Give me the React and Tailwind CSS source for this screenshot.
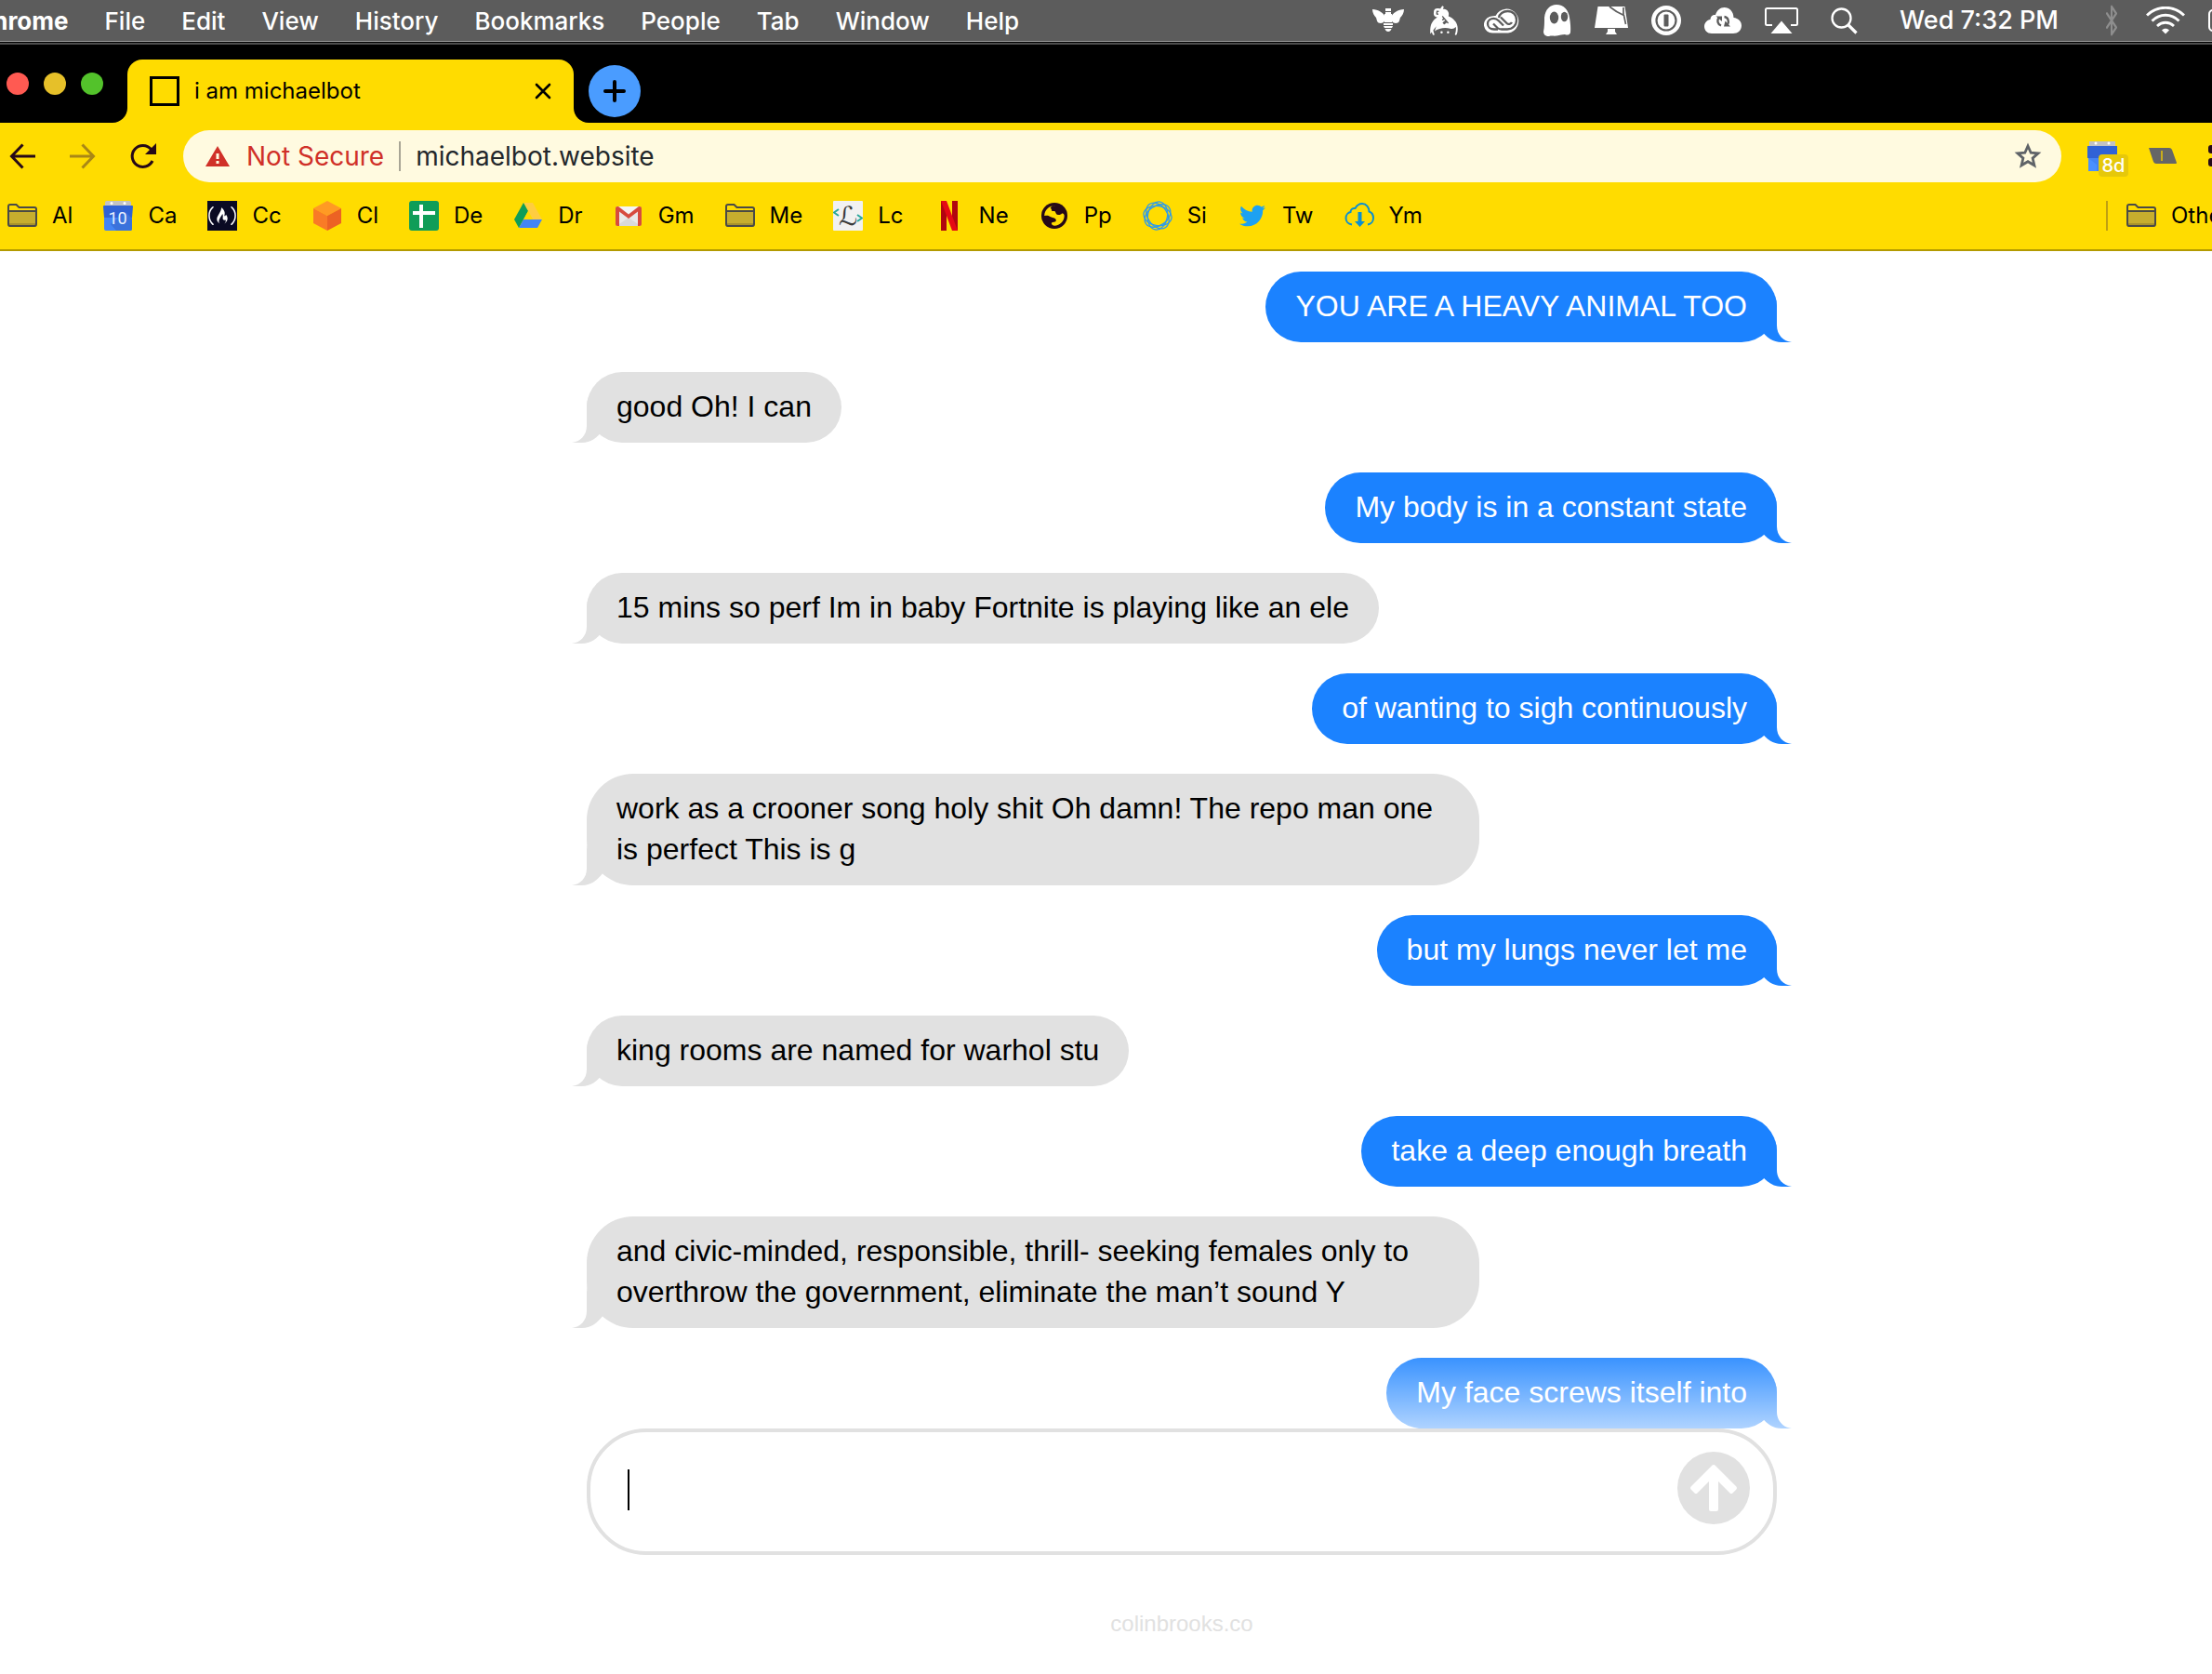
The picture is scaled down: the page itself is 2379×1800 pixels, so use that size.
import React, { useState } from 'react';
import { FaKeybase, FaFreeCodeCamp, FaTwitter } from 'react-icons/fa';
import { Bluetooth } from 'lucide-react';
import clsx from 'clsx';

const menuItems = ['File', 'Edit', 'View', 'History', 'Bookmarks', 'People', 'Tab', 'Window', 'Help'];

const messages = [
  { from: 'me', text: 'YOU ARE A HEAVY ANIMAL TOO' },
  { from: 'bot', text: 'good Oh! I can' },
  { from: 'me', text: 'My body is in a constant state' },
  { from: 'bot', text: '15 mins so perf Im in baby Fortnite is playing like an ele' },
  { from: 'me', text: 'of wanting to sigh continuously' },
  { from: 'bot', text: 'work as a crooner song holy shit Oh damn! The repo man one is perfect This is g' },
  { from: 'me', text: 'but my lungs never let me' },
  { from: 'bot', text: 'king rooms are named for warhol stu' },
  { from: 'me', text: 'take a deep enough breath' },
  { from: 'bot', text: 'and civic-minded, responsible, thrill- seeking females only to overthrow the government, eliminate the man’t sound Y' },
  { from: 'me', text: 'My face screws itself into' },
];

/* ---------- menu bar icons ---------- */

const BeeIcon = () => (
  <svg width="34" height="26" viewBox="0 0 34 26" fill="white">
    <path d="M0 1C6 1 13 5 14 10C14 13 12 16 9 16C5 16 5 13 4 10C2 8 0 5 0 1Z" />
    <path d="M34 1C28 1 21 5 20 10C20 13 22 16 25 16C29 16 29 13 30 10C32 8 34 5 34 1Z" />
    <path d="M14 0H20V3H14ZM14 4H20V6H21V15H13V6H14Z" />
    <path d="M12 16H22V18H12ZM12 19H22L21 21H13ZM13.500 22H20.500C20 24 18.500 25 17 25C15.500 25 14 24 13.500 22Z" />
  </svg>
);

const CreativeCloudIcon = () => (
  <svg width="39" height="28" viewBox="0 0 39 28" fill="none">
    <path d="M9 27.500A9 9 0 0 1 6 10C9 9 11 9 12.500 9A13 13 0 1 1 26 27.500Z" fill="white" />
    <g stroke="#5c5c5c" strokeWidth="2.300">
      <path d="M15 23.500H11C7 23.500 4 21 4 17.500C4 14 7 11.800 10.500 11.800C13 11.800 14.500 13 16 14.500L21 19.500" />
      <path d="M10 17.500L14.500 22C16 23.300 17 23.500 19 23.500H25C31 23.500 35 19 35 13.500C35 8 31 4 25.500 4C20.500 4 16.500 7 16 11" />
      <path d="M18 10.500L24.500 17C26 18.500 29 18 30 16" />
    </g>
  </svg>
);

const GhostIcon = () => (
  <svg width="30" height="34" viewBox="0 0 30 34">
    <path d="M14 0C22 0 27 6 28 14C29 20 29.500 25 29 30C28 33 25 33 23 32C20 32 18 33 14 33.500C11 34 9 33 6 34C2 34 0 32 0 29C1 24 1 19 1 14C2 5 7 0 14 0Z" fill="white" />
    <ellipse cx="11.500" cy="14" rx="4.700" ry="6.500" fill="#5c5c5c" />
    <ellipse cx="22.500" cy="13" rx="3.700" ry="5.200" fill="#5c5c5c" />
  </svg>
);

const MonitorIcon = () => (
  <svg width="36" height="31" viewBox="0 0 36 31">
    <path d="M3.500 0H32.500L36 23H0Z" fill="white" />
    <path d="M16 0C22 5 28 8 31.500 9.500L33.500 19M31 1V9.500" fill="none" stroke="#5c5c5c" strokeWidth="1.700" />
    <path d="M14 24H22V27L24 30H12L14 27Z" fill="white" />
  </svg>
);

const OnePasswordIcon = () => (
  <svg width="32" height="32" viewBox="0 0 32 32">
    <circle cx="16" cy="16" r="16" fill="white" />
    <circle cx="16" cy="16" r="10.500" fill="none" stroke="#5c5c5c" strokeWidth="2.200" />
    <rect x="13.500" y="9.500" width="5" height="13" rx="1" fill="#5c5c5c" />
  </svg>
);

const CloudSyncIcon = () => (
  <svg width="40" height="28" viewBox="0 0 40 28">
    <path d="M8 28C3 28 0 24.500 0 20.500C0 16.500 3 13.500 6.500 13C6.500 9.500 9.500 7.500 12 8C13.500 3 17 0 21.500 0C27 0 31.500 4.500 31.500 11C36.500 11.500 40 15 40 19.500C40 24.500 36 28 31 28Z" fill="white" />
    <g fill="none" stroke="#5c5c5c" strokeWidth="2.400">
      <path d="M18 19.500C14 18 13.500 14 15.500 11" />
      <path d="M21.500 10C25.500 10.500 27 15 25 18.500" />
    </g>
    <path d="M12.500 9.500H19V15ZM28 20.500H21L22.500 14.500Z" fill="#5c5c5c" />
  </svg>
);

const AirplayIcon = () => (
  <svg width="36" height="28" viewBox="0 0 36 28">
    <path d="M8 19H2.500Q1 19 1 17.500V2.500Q1 1 2.500 1H33.500Q35 1 35 2.500V17.500Q35 19 33.500 19H28" fill="none" stroke="white" strokeWidth="2" />
    <path d="M18 14.500L29.500 28H6.500Z" fill="white" />
  </svg>
);

const SearchIcon = () => (
  <svg width="29" height="29" viewBox="0 0 29 29" fill="none" stroke="white">
    <circle cx="11.500" cy="11.500" r="10" strokeWidth="2.300" />
    <path d="M19 19L27.500 27.500" strokeWidth="3.200" />
  </svg>
);

const WifiIcon = () => (
  <svg width="42" height="30" viewBox="0 0 42 30" fill="none" stroke="white" strokeWidth="2.900">
    <path d="M1 9.500C12-1.500 30-1.500 41 9.500" />
    <path d="M6.500 15.500C15 7.200 27 7.200 35.500 15.500" />
    <path d="M12 21C17.500 16 24.500 16 30 21" />
    <path d="M21 29.500L17 25.500C19 23.300 23 23.300 25 25.500Z" fill="white" stroke="none" />
  </svg>
);

const BatteryIcon = () => (
  <svg width="48" height="24" viewBox="0 0 48 24">
    <rect x="1" y="1" width="42" height="22" rx="4" fill="none" stroke="white" strokeWidth="2" />
    <rect x="5" y="5" width="34" height="14" rx="1" fill="white" />
  </svg>
);

/* ---------- bookmark icons ---------- */

const FolderIcon = () => (
  <svg width="32" height="32" viewBox="0 0 32 32" className="shrink-0">
    <path d="M1 11H31V26Q31 28 29 28H3Q1 28 1 26Z" fill="#c7ae2e" />
    <path d="M1 24H31V26Q31 28 29 28H3Q1 28 1 26Z" fill="#a9932a" />
    <path d="M1 6Q1 4 3 4H9.500L12.500 7H29Q31 7 31 9V25Q31 27 29 27H3Q1 27 1 25ZM1 11H31" fill="none" stroke="#4a4a46" strokeWidth="2" />
  </svg>
);

const CalendarIcon = () => (
  <svg width="32" height="32" viewBox="0 0 32 32">
    <path d="M2 2Q2 0 4 0H28Q30 0 30 2V6H2Z" fill="#c2c2c2" />
    <circle cx="9" cy="2.500" r="1.500" fill="white" />
    <circle cx="23" cy="2.500" r="1.500" fill="white" />
    <path d="M0 6Q0 5 1 5H31Q32 5 32 6L31 18H1Z" fill="#3062d6" />
    <path d="M1 18H31V30Q31 32 29 32H3Q1 32 1 30Z" fill="#4384f4" />
    <path d="M8 25L14 32H29Q31 32 31 30V19L24 12Z" fill="#3a72dc" />
    <text x="15.500" y="25" textAnchor="middle" className="font-['Roboto',sans-serif] text-[18px]" fill="#e8f0fe">10</text>
  </svg>
);

const CodeCampIcon = () => (
  <span className="flex size-8 items-center justify-center bg-[#0a0a23]">
    <FaFreeCodeCamp className="size-[30px] text-white" />
  </span>
);

const CubeIcon = () => (
  <svg width="32" height="32" viewBox="0 0 32 32">
    <path d="M16 0L31 8L16 16L1 8Z" fill="#ff9a24" />
    <path d="M1 8L16 16V32L1 24Z" fill="#f97b26" />
    <path d="M31 8L16 16V32L31 24Z" fill="#ec6224" />
  </svg>
);

const SheetsIcon = () => (
  <svg width="32" height="32" viewBox="0 0 32 32">
    <rect width="32" height="32" rx="3" fill="#0f9d58" />
    <path d="M11 4H15V29H11ZM4 11H28V15H4Z" fill="white" />
  </svg>
);

const DriveIcon = () => (
  <svg width="32" height="32" viewBox="0 0 32 32">
    <path d="M11 2H21L31 20H21Z" fill="#ffcd40" />
    <path d="M11 2L16 11L6 29L1 20Z" fill="#0f9d58" />
    <path d="M11 20H31L26 29H6Z" fill="#4385f5" />
    <path d="M16 11L21 20H11Z" fill="#ffdc00" />
  </svg>
);

const GmailIcon = () => (
  <svg width="32" height="32" viewBox="0 0 32 32">
    <path d="M3 6H29V27H3Z" fill="#e9e9e9" />
    <path d="M3 27L16 18L29 27Z" fill="#d9d9d9" />
    <path d="M6 6H26L16 14Z" fill="#f5f5f5" />
    <path d="M2 8Q2 6 4 6H5L16 14.500L27 6H28Q30 6 30 8V25Q30 27 28 27H26V11.500L16 19L6 11.500V27H4Q2 27 2 25Z" fill="#d74b3f" />
  </svg>
);

const ScriptIcon = () => (
  <svg width="32" height="32" viewBox="0 0 32 32">
    <rect width="32" height="32" rx="1" fill="#f1f1f1" />
    <text x="16" y="26" textAnchor="middle" className="font-['DejaVu_Sans',sans-serif] text-[28px]" fill="#3a3a3a">ℒ</text>
    <path d="M6 9L1 12.500L6 16M26 15L31 18.500L26 22" fill="none" stroke="#2aa79b" strokeWidth="2" />
  </svg>
);

const NetflixIcon = () => (
  <svg width="32" height="32" viewBox="0 0 32 32">
    <rect x="7" width="6" height="32" fill="#b1060f" />
    <rect x="19" width="6" height="32" fill="#b1060f" />
    <path d="M7 0H13L25 32H19Z" fill="#e50914" />
  </svg>
);

const GlobeIcon = () => (
  <svg width="32" height="32" viewBox="0 0 32 32">
    <circle cx="16" cy="16" r="14" fill="#260918" />
    <path d="M17 5C13 5 11.500 7 11.500 9.500C12 11 14 11 15.500 11C17.500 11 17 13 18.500 14.500C21 15.500 23 15 24 13.500C25.500 13.500 26.500 14 26.700 16C26.500 22 22 26.500 16 26.800C13.500 26.500 12.500 25 13 23.500C14.500 22.800 16.500 23 17.500 22C18.500 20 17 18.500 14 18L11.500 17C9.500 15.500 8 15.500 5.200 16C5.500 10 9.500 5.500 17 5Z" fill="#ffdc00" />
    <path d="M11 8C13 7 14 12 12 13C9 13 9 16 6 15C6 12 8 9 11 8Z" fill="#ffdc00" />
  </svg>
);

const RingsIcon = () => (
  <svg width="32" height="32" viewBox="0 0 32 32" fill="none" stroke="#2f9be8" strokeWidth="1.300">
    {[10, 55, 100, 145].map((angle) => (
      <ellipse key={angle} cx="16" cy="16" rx="15.200" ry="10.500" transform={`rotate(${angle} 16 16)`} />
    ))}
  </svg>
);

const TwitterIcon = () => (
  <span className="flex size-8 items-center justify-center">
    <FaTwitter className="size-7 text-[#1da1f2]" />
  </span>
);

const CloudDownIcon = () => (
  <svg width="32" height="32" viewBox="0 0 32 32" fill="none" stroke="#0b8fd0" strokeWidth="2">
    <path d="M8 25.500C4 25 1.500 22 1.500 18.500C1.500 15 4 12.500 6.500 12C6.500 9 9 7.500 11.500 8C13.500 4.500 16 3 19 3C23.500 3 26.500 7 26.500 11.500C29.500 12.500 31 15.500 31 18.500C31 22 28.500 25 25 25.500" />
    <path d="M14.500 12H18.500V22H22L16.500 28L11 22H14.500Z" fill="#0b8fd0" stroke="none" />
  </svg>
);

const bookmarks = [
  { label: 'Al', Icon: FolderIcon },
  { label: 'Ca', Icon: CalendarIcon },
  { label: 'Cc', Icon: CodeCampIcon },
  { label: 'Cl', Icon: CubeIcon },
  { label: 'De', Icon: SheetsIcon },
  { label: 'Dr', Icon: DriveIcon },
  { label: 'Gm', Icon: GmailIcon },
  { label: 'Me', Icon: FolderIcon },
  { label: 'Lc', Icon: ScriptIcon },
  { label: 'Ne', Icon: NetflixIcon },
  { label: 'Pp', Icon: GlobeIcon },
  { label: 'Si', Icon: RingsIcon },
  { label: 'Tw', Icon: TwitterIcon },
  { label: 'Ym', Icon: CloudDownIcon },
];

const MenuBar = () => (
  <div className="overflow-hidden">
    <div className="flex h-11 items-center justify-between bg-[#5c5c5c] font-medium text-white">
      <nav className="-ml-[27px] flex shrink-0 items-center gap-[39px] text-[26px]">
        <button className="font-bold">Chrome</button>
        {menuItems.map((item) => (
          <button key={item}>{item}</button>
        ))}
      </nav>
      <div className="-mr-11 flex shrink-0 items-center gap-[25px] text-[27px]">
        <BeeIcon />
        <FaKeybase className="size-9" />
        <CreativeCloudIcon />
        <GhostIcon />
        <MonitorIcon />
        <OnePasswordIcon />
        <CloudSyncIcon />
        <AirplayIcon />
        <span className="ml-2.5"><SearchIcon /></span>
        <span className="mx-5">Wed 7:32 PM</span>
        <Bluetooth className="h-9 w-6 text-[#8e8e8e]" strokeWidth={2} preserveAspectRatio="none" />
        <WifiIcon />
        <BatteryIcon />
      </div>
    </div>
    <div className="h-px bg-[#9a9a9a]" />
    <div className="h-px bg-black" />
    <div className="h-0.5 bg-[#4d4d4d]" />
  </div>
);

const TabStrip = () => (
  <div className="flex h-[84px] items-center bg-black pl-[7px]">
    <div className="flex gap-4">
      <button aria-label="Close window" className="size-6 rounded-full bg-[#ff5a52]" />
      <button aria-label="Minimize window" className="size-6 rounded-full bg-[#e6c029]" />
      <button aria-label="Zoom window" className="size-6 rounded-full bg-[#53c22b]" />
    </div>
    <div className="relative ml-[26px] flex h-[68px] w-[480px] items-center self-end rounded-t-2xl bg-[#ffdc00] px-6">
      <span className="absolute bottom-0 -left-4 size-4 bg-[#ffdc00]">
        <span className="block size-4 rounded-br-2xl bg-black" />
      </span>
      <span className="absolute -right-4 bottom-0 size-4 bg-[#ffdc00]">
        <span className="block size-4 rounded-bl-2xl bg-black" />
      </span>
      <span className="size-8 border-3 border-black" />
      <span className="ml-4 text-2xl text-black">i am michaelbot</span>
      <button aria-label="Close tab" className="ml-auto">
        <svg width="18" height="18" viewBox="0 0 18 18" stroke="black" strokeWidth="2.600" strokeLinecap="round">
          <path d="M2 2L16 16M16 2L2 16" />
        </svg>
      </button>
    </div>
    <button aria-label="New tab" className="mb-1.5 ml-4 flex size-14 items-center justify-center self-end rounded-full bg-[#4a9cff]">
      <svg width="24" height="24" viewBox="0 0 24 24" stroke="black" strokeWidth="4" strokeLinecap="round">
        <path d="M12 2V22M2 12H22" />
      </svg>
    </button>
  </div>
);

const Toolbar = () => (
  <div className="flex h-[72px] items-center overflow-hidden bg-[#ffdc00] pl-2.5">
    <div className="flex shrink-0 items-center gap-[37px]">
      <button aria-label="Back">
        <svg width="28" height="28" viewBox="0 0 28 28" fill="none" stroke="#260918" strokeWidth="3">
          <path d="M28 14H3M14.500 1.500L2.500 14L14.500 26.500" />
        </svg>
      </button>
      <button aria-label="Forward">
        <svg width="28" height="28" viewBox="0 0 28 28" fill="none" stroke="#a98716" strokeWidth="3">
          <path d="M0 14H25M13.500 1.500L25.500 14L13.500 26.500" />
        </svg>
      </button>
      <button aria-label="Reload">
        <svg width="28" height="28" viewBox="0 0 28 28">
          <path d="M24 19A11.500 11.500 0 1 1 22.500 6.500" fill="none" stroke="#260918" strokeWidth="3" />
          <path d="M28 0V12H16Z" fill="#260918" />
        </svg>
      </button>
    </div>
    <div className="ml-[29px] flex h-14 flex-1 items-center rounded-full bg-[#fffae0] pr-5 pl-6 text-[28px]">
      <svg width="26" height="22" viewBox="0 0 26 22">
        <path d="M13 0L26 22H0Z" fill="#d03028" />
        <path d="M11.500 8H14.500V14H11.500ZM11.500 16H14.500V19H11.500Z" fill="#fffae0" />
      </svg>
      <label htmlFor="address" className="ml-[18px] shrink-0 text-[#d03028]">Not Secure</label>
      <span className="mx-4 h-8 w-0.5 bg-[#a8a595]" />
      <input id="address" defaultValue="michaelbot.website" className="min-w-0 flex-1 bg-transparent text-[#23272b] outline-none" />
      <button aria-label="Bookmark this page">
        <svg width="32" height="32" viewBox="0 0 32 32" fill="none" stroke="#5f6368" strokeWidth="2.800">
          <path d="M16 5L19.200 12.200L27 12.900L21.100 18.100L22.900 25.800L16 21.700L9.100 25.800L10.900 18.100L5 12.900L12.800 12.200Z" />
        </svg>
      </button>
    </div>
    <div className="-mr-8 ml-7 flex shrink-0 items-center">
      <button aria-label="Calendar" className="relative h-11 w-11">
        <svg width="32" height="32" viewBox="0 0 32 32">
          <path d="M2 0H30V5H2Z" fill="#c2c2c2" />
          <circle cx="9" cy="2" r="1.500" fill="white" />
          <circle cx="23" cy="2" r="1.500" fill="white" />
          <path d="M0 5H32V18H0Z" fill="#3062d6" />
          <path d="M1 18H12V32H1Z" fill="#4384f4" />
          <path d="M1 18L10 25V32H1Z" fill="#4a90ff" />
        </svg>
        <span className="absolute right-0 bottom-0 flex h-6 w-8 items-center justify-center rounded bg-[#e6c80a] text-xl font-medium text-white">8d</span>
      </button>
      <button aria-label="Extension" className="ml-[22px]">
        <svg width="30" height="18" viewBox="0 0 30 18">
          <path d="M0 0H22Q24 0 25 2L30 16Q30 17 29 17H8Q6 17 5 15Z" fill="#666" />
          <path d="M13 3H15V14H13Z" fill="#c9ad1c" />
        </svg>
      </button>
      <button aria-label="More extensions" className="ml-[34px]">
        <svg width="36" height="24" viewBox="0 0 36 24" fill="#260918">
          <rect width="36" height="9" rx="3" />
          <rect y="14" width="36" height="9" rx="3" />
        </svg>
      </button>
    </div>
  </div>
);

const BookmarksBar = () => (
  <div className="flex h-[66px] items-center justify-between overflow-hidden border-b-2 border-[#b39a00] bg-[#ffdc00] pb-2 text-2xl text-black">
    <nav className="flex items-center gap-[33px] pl-2">
      {bookmarks.map(({ label, Icon }) => (
        <a key={label} href="#" className="flex items-center gap-4">
          <Icon />
          {label}
        </a>
      ))}
    </nav>
    <div className="-mr-[142px] flex shrink-0 items-center">
      <span className="h-8 w-0.5 bg-[#bf9f12]" />
      <a href="#" className="ml-5 flex w-[234px] items-center gap-4 whitespace-nowrap">
        <FolderIcon />
        Other Bookmarks
      </a>
    </div>
  </div>
);

const Bubble = ({ message }) => {
  const mine = message.from === 'me';

  return (
    <li
      className={clsx(
        'relative max-w-3/4 rounded-[50px] px-8 pt-[15px] pb-[17px] text-[32px] leading-[44px]',
        mine ? 'self-end bg-[#1b82ff] text-white' : 'self-start bg-[#e1e1e1] text-black'
      )}
    >
      <svg
        width="54"
        height="50"
        viewBox="0 -12 54 50"
        className={clsx(
          'absolute bottom-0',
          mine ? '-right-4 text-[#1b82ff]' : '-left-4 -scale-x-100 text-[#e1e1e1]'
        )}
      >
        <path d="M0 -12H36Q38 -6 38 0V20C38 30 45 37 54 38H43C34 38 27 33 20 24L0 0Z" fill="currentColor" />
      </svg>
      <span className="relative">{message.text}</span>
    </li>
  );
};

const App = () => {
  const [draft, setDraft] = useState('');

  return (
    <div className="min-h-screen overflow-hidden bg-white font-['Inter',sans-serif]">
      <header>
        <MenuBar />
        <TabStrip />
        <Toolbar />
        <BookmarksBar />
      </header>

      <main className="flex flex-col items-center pt-[22px] pl-[163px] font-['Liberation_Sans',sans-serif]">
        <div className="w-full max-w-[1280px]">
          <div className="relative">
            <ul className="flex flex-col gap-8">
              {messages.map((message) => (
                <Bubble key={message.text} message={message} />
              ))}
            </ul>
            {/* fades the newest message out towards the input */}
            <div className="pointer-events-none absolute -inset-x-4 bottom-0 h-24 bg-linear-to-b from-white/0 to-white/65" />
          </div>

          <form
            onSubmit={(e) => e.preventDefault()}
            className="relative flex h-[136px] items-center rounded-[64px] border-4 border-[#e1e1e1] pr-[25px] pl-10"
          >
            <label htmlFor="draft" className="sr-only">Message</label>
            <input
              id="draft"
              value={draft}
              onChange={(e) => setDraft(e.target.value)}
              className="h-16 min-w-0 flex-1 bg-transparent text-[32px] caret-transparent outline-none"
            />
            {draft === '' && <span className="absolute top-10 left-10 h-11 w-0.5 bg-black" />}
            <button aria-label="Send" className="mb-2">
              <svg width="78" height="78" viewBox="0 0 78 78">
                <circle cx="39" cy="39" r="39" fill="#e1e1e1" />
                <path
                  d="M39 16L16 39L20 43L36 27V62H42V27L58 43L62 39Z"
                  fill="white"
                  stroke="white"
                  strokeWidth="4"
                  strokeLinejoin="round"
                />
              </svg>
            </button>
          </form>
        </div>

        <footer className="mt-14 text-2xl leading-9 text-[#e1e1e1]">
          <a href="#">colinbrooks.co</a>
        </footer>
      </main>
    </div>
  );
};

export default App;
